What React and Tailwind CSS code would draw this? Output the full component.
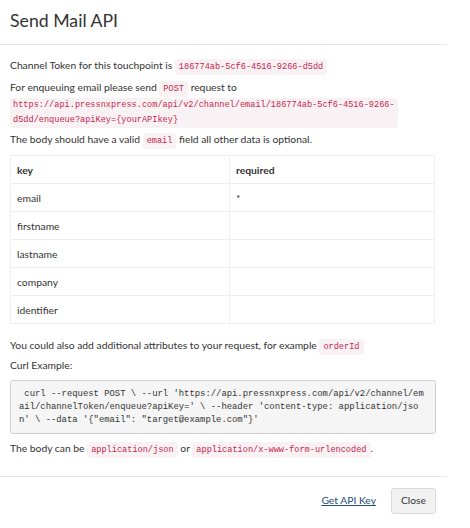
import React from 'react';

const fields = ['email', 'firstname', 'lastname', 'company', 'identifier'];

function Code({ children }) {
  return (
    <code className="rounded-[3px] bg-[#f9f2f4] px-[4px] py-[3px] font-['Liberation_Mono',monospace] text-[8.6px] leading-none text-[#c7254e]">
      {children}
    </code>
  );
}

export default function App() {
  return (
    <div className="w-[447px] bg-white font-['Lato',sans-serif] text-[10.3px] text-[#333]">
      {/* Header */}
      <div className="h-[45px] border-b border-[#e5e5e5] px-[10px] pt-[10px]">
        <h4 className="text-[17.7px] leading-[22px] text-[#333]">Send Mail API</h4>
      </div>

      {/* Body */}
      <div className="px-[10px] pt-[11px] pb-[19px] leading-[18px]">
        <p className="mb-[4px]">
          Channel Token for this touchpoint is <Code>186774ab-5cf6-4516-9266-d5dd</Code>
        </p>
        <p className="mb-[2px]">
          For enqueuing email please send <Code>POST</Code> request to
          <br />
          <span className="mt-[2px] inline-block rounded-[3px] bg-[#f9f2f4] px-[3px] font-['Liberation_Mono',monospace] text-[8.6px] leading-[15px] text-[#c7254e]">
            https://api.pressnxpress.com/api/v2/channel/email/186774ab-5cf6-4516-9266-
            <br />
            d5dd/enqueue?apiKey={'{yourAPIkey}'}
          </span>
        </p>
        <p className="mb-[7px]">
          The body should have a valid <Code>email</Code> field all other data is optional.
        </p>

        <table className="mb-[12px] w-[425px] border-collapse border border-[#efefef]">
          <thead>
            <tr className="h-[28px]">
              <th className="w-[219px] border border-[#efefef] px-[6px] text-left font-bold">key</th>
              <th className="border border-[#efefef] px-[6px] text-left font-bold">required</th>
            </tr>
          </thead>
          <tbody>
            {fields.map((f) => (
              <tr key={f} className="h-[28px]">
                <td className="border border-[#efefef] px-[6px]">{f}</td>
                <td className="border border-[#efefef] px-[6px] align-top pt-[5px]">{f === 'email' ? '*' : ''}</td>
              </tr>
            ))}
          </tbody>
        </table>

        <p className="mb-[2px]">
          You could also add additional attributes to your request, for example <Code>orderId</Code>
        </p>
        <p className="mb-[6px]">Curl Example:</p>
        <pre className="mb-[5px] w-[426px] rounded-[3px] border border-[#cfcfcf] bg-[#f5f5f5] px-[8px] pt-[7px] pb-[6px] font-['Liberation_Mono',monospace] text-[8.9px] leading-[13px] text-[#333]">
          {` curl --request POST \\ --url 'https://api.pressnxpress.com/api/v2/channel/em\nail/channelToken/enqueue?apiKey=' \\ --header 'content-type: application/jso\nn' \\ --data '{"email": "target@example.com"}'`}
        </pre>
        <p>
          The body can be <Code>application/json</Code> or <Code>application/x-www-form-urlencoded</Code>.
        </p>
      </div>

      {/* Footer */}
      <div className="flex items-center justify-end gap-[15px] border-t border-[#e5e5e5] px-[11px] pt-[11px] pb-[14px]">
        <a href="#" className="text-[#1f4e79] underline">Get API Key</a>
        <button className="h-[26px] rounded-[3px] border border-[#d9d9d9] bg-[#f2f2f2] px-[9px] text-[10.3px] text-[#333]">
          Close
        </button>
      </div>
    </div>
  );
}
